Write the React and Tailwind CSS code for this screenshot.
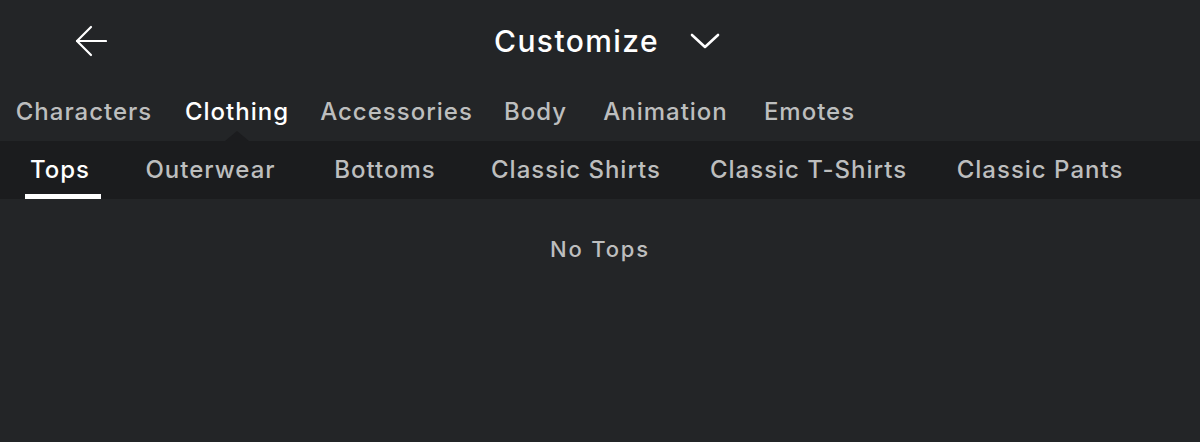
const mainTabs = [
  { label: 'Characters', w: 'w-[134px]' },
  { label: 'Clothing', w: 'w-[106px]' },
  { label: 'Accessories', w: 'w-[147px]' },
  { label: 'Body', w: 'w-[65px]' },
  { label: 'Animation', w: 'w-[129px]' },
  { label: 'Emotes', w: 'w-[93px]' }
]

const subTabs = [
  { label: 'Tops', w: 'w-[58px]' },
  { label: 'Outerwear', w: 'w-[132px]' },
  { label: 'Bottoms', w: 'w-[106px]' },
  { label: 'Classic Shirts', w: 'w-[165px]' },
  { label: 'Classic T-Shirts', w: 'w-[189px]' },
  { label: 'Classic Pants', w: 'w-[163px]' }
]

const App = () => {
  const activeMain = 'Clothing'
  const activeSub = 'Tops'

  return (
    <div
      className="w-[1200px] h-[442px] bg-[#232527] text-[#bdbebe] flex flex-col overflow-hidden"
      style={{ fontFamily: 'Inter, "Noto Sans", sans-serif' }}
    >
      {/* Header */}
      <div className="relative h-[82px] flex items-center justify-center pl-[14px] shrink-0">
        <button className="absolute left-[74px] top-[24px] w-[34px] h-[34px] flex items-center justify-center text-white">
          <svg width="32" height="32" viewBox="0 0 32 32" fill="none" stroke="currentColor" strokeWidth="2.2" strokeLinecap="round" strokeLinejoin="round">
            <path d="M31 16H2" />
            <path d="M16 2L2 16l14 14" />
          </svg>
        </button>
        <div className="flex items-center gap-[31px] text-white">
          <span className="text-[30px] font-medium tracking-[1.4px]">Customize</span>
          <svg width="30" height="16" viewBox="0 0 30 16" fill="none" stroke="currentColor" strokeWidth="2.6" strokeLinecap="round" strokeLinejoin="round">
            <path d="M2 2l13 12L28 2" />
          </svg>
        </div>
      </div>

      {/* Main tabs */}
      <div className="h-[59px] flex items-center pl-[17px] gap-[33px] shrink-0">
        {mainTabs.map(tab => (
          <div key={tab.label} className={`relative h-full flex items-center justify-center ${tab.w}`}>
            <span className={`text-[24px] font-medium tracking-[1px] whitespace-nowrap ${tab.label === activeMain ? 'text-white' : 'text-[#bdbebe]'}`}>
              {tab.label}
            </span>
            {tab.label === activeMain && (
              <div className="absolute bottom-0 left-1/2 -translate-x-1/2 w-0 h-0 border-l-[12px] border-r-[12px] border-b-[10px] border-l-transparent border-r-transparent border-b-[#1b1c1e]" />
            )}
          </div>
        ))}
      </div>

      {/* Sub tabs */}
      <div className="h-[58px] bg-[#1b1c1e] flex pl-[31px] gap-[55.5px] shrink-0">
        {subTabs.map(tab => (
          <div key={tab.label} className={`relative h-full flex items-center justify-center ${tab.w}`}>
            <span className={`text-[24px] font-medium tracking-[1px] whitespace-nowrap ${tab.label === activeSub ? 'text-white' : 'text-[#bdbebe]'}`}>
              {tab.label}
            </span>
            {tab.label === activeSub && <div className="absolute bottom-0 left-[-6px] w-[76px] h-[5px] bg-white" />}
          </div>
        ))}
      </div>

      {/* Content */}
      <div className="flex-1 flex justify-center pt-[34px]">
        <span className="text-[22px] font-medium tracking-[1.8px] text-[#bdbebe]">No Tops</span>
      </div>
    </div>
  )
}

export default App
